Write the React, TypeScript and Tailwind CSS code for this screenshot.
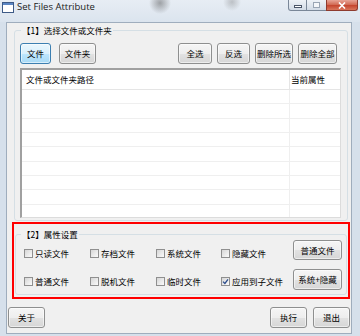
import React from "react";

function Btn({
  children,
  className = "",
  primary = false,
}: {
  children: React.ReactNode;
  className?: string;
  primary?: boolean;
}) {
  const skin = primary
    ? "border-[#3c7fb1] bg-[linear-gradient(to_bottom,#eaf6fd_0%,#d9f0fc_50%,#bee6fd_51%,#a7d9f5_100%)]"
    : "border-[#8e8f8f] bg-[linear-gradient(to_bottom,#f5f5f5_0%,#eeeeee_50%,#e2e2e2_51%,#d6d6d6_100%)]";
  return (
    <div
      className={
        "flex h-full shrink-0 items-center justify-center whitespace-nowrap rounded-[3px] border text-[8.5px] leading-none text-black shadow-[inset_0_0_0_1px_rgba(255,255,255,0.55)] " +
        skin +
        " " +
        className
      }
    >
      {children}
    </div>
  );
}

function Check({
  label,
  checked = false,
  className = "",
}: {
  label: string;
  checked?: boolean;
  className?: string;
}) {
  return (
    <div className={"flex h-[10px] items-center " + className}>
      <span className="flex h-[9px] w-[9px] shrink-0 items-center justify-center border border-[#8f8f8f] bg-[linear-gradient(135deg,#d6d6d6,#fbfbfb)]">
        {checked && (
          <svg width="7" height="7" viewBox="0 0 7 7">
            <path d="M1 3.6 L2.9 5.5 L6 1.3" fill="none" stroke="#2c4d8c" strokeWidth="1.3" />
          </svg>
        )}
      </span>
      <span className="ml-[2px] whitespace-nowrap text-[8.5px] leading-[10px] text-black">{label}</span>
    </div>
  );
}

export default function App() {
  const rows = Array.from({ length: 9 });
  return (
    <div className="relative h-[336px] w-[360px] overflow-hidden bg-[#d6e0eb] font-['Noto_Sans_CJK_SC','Noto_Sans',sans-serif]">
      {/* title bar */}
      <div className="flex h-[22px] items-start bg-[radial-gradient(circle_at_160px_3px,rgba(70,70,70,0.45),transparent_11px),radial-gradient(circle_at_232px_2px,rgba(110,110,110,0.35),transparent_9px),linear-gradient(to_bottom,#e7edf4,#dbe4ee)]">
        <div className="ml-[2px] mt-[2px]">
          <svg width="12" height="11" viewBox="0 0 12 11">
            <rect x="0.5" y="0.5" width="11" height="10" fill="#ffffff" stroke="#3d5a86" />
            <rect x="1" y="1" width="10" height="2" fill="#5b86c4" />
          </svg>
        </div>
        <span className="ml-[3px] mt-[1px] text-[9.5px] leading-[12px] text-[#1a1a1a] font-['Open_Sans','Noto_Sans',sans-serif]">
          Set Files Attribute
        </span>
        <div className="ml-auto mr-[2px] flex h-[11px]">
          <div className="flex w-[19px] items-end justify-center rounded-bl-[3px] border border-t-0 border-[#7a8798] bg-[linear-gradient(to_bottom,#eef2f7,#d2dbe6)] pb-[2px]">
            <div className="h-[3px] w-[8px] border border-[#4a5568] bg-white" />
          </div>
          <div className="flex w-[19px] items-center justify-center border-b border-[#7a8798] bg-[linear-gradient(to_bottom,#eef2f7,#d2dbe6)]">
            <div className="h-[6px] w-[7px] border border-[#9aa6b5] bg-[#f4f6f9]" />
          </div>
          <div className="flex w-[32px] items-center justify-center rounded-br-[3px] border border-t-0 border-[#8e3b2e] bg-[linear-gradient(to_bottom,#e8a597,#d0664f_50%,#c4432c_51%,#d9765c)]">
            <svg width="8" height="7" viewBox="0 0 8 7">
              <path d="M1 0.5 L7 6.5 M7 0.5 L1 6.5" stroke="#ffffff" strokeWidth="1.6" />
            </svg>
          </div>
        </div>
      </div>

      {/* client area */}
      <div className="ml-[6px] flex h-[312px] w-[346px] flex-col border border-[#9fadbd] bg-[#f0f0f0] text-black">
        {/* group 1 */}
        <fieldset className="ml-[7px] mt-[2px] w-[334px] rounded-[3px] border border-[#d5dfe5]">
          <legend className="ml-[6px] px-[1px] text-[8.5px] leading-[10px]">【1】选择文件或文件夹</legend>
          <div className="pb-[2px] pl-[5px] pr-[6px] pt-[8px]">
            <div className="flex h-[21px]">
              <Btn primary className="w-[31px]">文件</Btn>
              <Btn className="ml-[8px] w-[37px]">文件夹</Btn>
              <Btn className="ml-auto w-[34px]">全选</Btn>
              <Btn className="ml-[5px] w-[33px]">反选</Btn>
              <Btn className="ml-[5px] w-[38px]">删除所选</Btn>
              <Btn className="ml-[5px] mr-[4px] w-[39px]">删除全部</Btn>
            </div>
            <div className="mt-[4px] h-[150px] overflow-hidden border-b border-l-2 border-r border-t-2 border-b-[#dcdcdc] border-l-[#a0a0a0] border-r-[#dcdcdc] border-t-[#a0a0a0] bg-white">
              <div className="flex h-[20px] border-b border-[#e5e5e5] text-[8.5px] leading-none">
                <div className="flex h-full w-[268px] items-center border-r border-[#e5e5e5] pl-[4px]">
                  文件或文件夹路径
                </div>
                <div className="flex h-full items-center pl-[1px]">当前属性</div>
              </div>
              {rows.map((_, i) => (
                <div key={i} className="flex h-[14.33px] border-b border-[#efefef]">
                  <div className="h-full w-[268px] border-r border-[#efefef]" />
                </div>
              ))}
            </div>
          </div>
        </fieldset>

        {/* group 2 */}
        <fieldset className="ml-[8px] mt-[8px] w-[332px] rounded-[3px] border border-[#d5dfe5]">
          <legend className="ml-[5px] px-[1px] text-[8.5px] leading-[10px]">【2】属性设置</legend>
          <div className="flex pb-[4px] pl-[8px] pr-[4px]">
            <div className="flex flex-col gap-[18px] pt-[9px]">
              <div className="flex">
                <Check className="w-[66px]" label="只读文件" />
                <Check className="w-[66px]" label="存档文件" />
                <Check className="w-[65px]" label="系统文件" />
                <Check label="隐藏文件" />
              </div>
              <div className="flex">
                <Check className="w-[66px]" label="普通文件" />
                <Check className="w-[66px]" label="脱机文件" />
                <Check className="w-[65px]" label="临时文件" />
                <Check checked label="应用到子文件" />
              </div>
            </div>
            <div className="ml-auto flex flex-col gap-[9px] pt-[1px]">
              <div className="h-[20px]">
                <Btn className="w-[49px]">普通文件</Btn>
              </div>
              <div className="h-[21px]">
                <Btn className="w-[49px]">系统+隐藏</Btn>
              </div>
            </div>
          </div>
        </fieldset>

        {/* bottom buttons */}
        <div className="mt-[12px] flex h-[21px] px-[1px]">
          <Btn className="w-[37px]">关于</Btn>
          <Btn className="ml-auto w-[37px]">执行</Btn>
          <Btn className="ml-[6px] w-[37px]">退出</Btn>
        </div>
      </div>

      {/* red annotation box */}
      <div className="pointer-events-none absolute left-[12px] top-[222px] h-[77px] w-[338px] border-2 border-[#ff0000]" />
    </div>
  );
}
